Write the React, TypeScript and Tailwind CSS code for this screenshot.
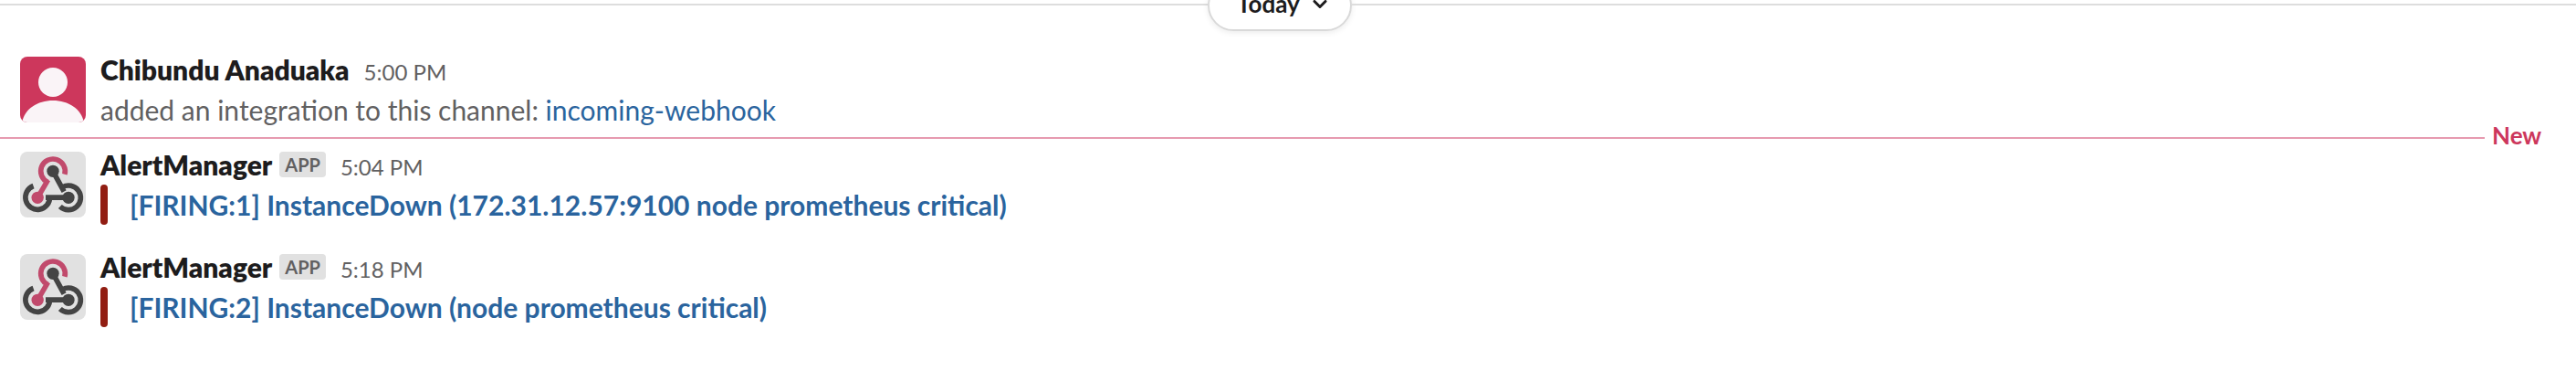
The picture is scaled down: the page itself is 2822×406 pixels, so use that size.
import type { ReactNode } from "react";

function UserAvatar() {
  return (
    <svg className="block size-[72px] shrink-0 rounded-lg" viewBox="0 0 72 72">
      <rect width="72" height="72" fill="#cd375c" />
      <circle cx="36" cy="28" r="16" fill="#faf4f7" />
      <path d="M2 72C5 57 19 48 36 48s31 9 34 24z" fill="#faf4f7" />
    </svg>
  );
}

function WebhookAvatar() {
  return (
    <svg className="block size-[72px] shrink-0 rounded-lg" viewBox="0 0 216 216">
      <rect width="216" height="216" fill="#e1e1e1" />
      <g fill="none" strokeWidth="17">
        <path stroke="#c14a6c" d="M146.6 74.4A40 40 0 1 0 91.5 100.5M91.700 92.600L57.500 151" />
        <path stroke="#444" d="M43.700 112.500A40 40 0 1 0 97.500 147.500M84 150.500H159" />
        <path stroke="#444" d="M131.500 180A40 40 0 1 0 139 116.500M144.400 130.800L108 64" />
      </g>
      <circle cx="108" cy="64" r="20" fill="#444" />
      <circle cx="57.500" cy="151" r="20" fill="#c14a6c" />
      <circle cx="159" cy="151" r="20" fill="#444" />
    </svg>
  );
}

type MessageProps = {
  avatar: ReactNode;
  name: string;
  time: string;
  app?: boolean;
  children: ReactNode;
};

function Message({ avatar, name, time, app, children }: MessageProps) {
  return (
    <article className="flex gap-4 pl-[22px]">
      <div className="pt-2">{avatar}</div>
      <div className="min-w-0 grow">
        <div className="flex h-11 items-baseline whitespace-nowrap leading-[44px]">
          <span className="font-extrabold text-[#1d1c1d]">{name}</span>
          {app && (
            <span className="ml-2 mt-2 h-7 self-start rounded-[4px] bg-[#e1e1e1] px-1.5 text-[20px] font-bold leading-[28px] text-[#616061]">
              APP
            </span>
          )}
          <span className="ml-4 text-[24px] text-[#616061]">{time}</span>
        </div>
        {children}
      </div>
    </article>
  );
}

function Alert({ children }: { children: ReactNode }) {
  return (
    <div className="flex gap-6 leading-[44px]">
      <div className="h-11 w-2 rounded-[4px] bg-[#911d12]" />
      <a className="font-bold text-[#2a649e]">{children}</a>
    </div>
  );
}

export default function App() {
  return (
    <main className="h-[406px] w-full overflow-hidden bg-white font-['Lato',sans-serif] text-[30px]">
      <header className="-mt-[22px] flex h-14 items-center">
        <div className="mb-0.5 h-0.5 w-[1323px] bg-[#dddddd]" />
        <button className="flex h-14 w-[158px] items-center rounded-full border-2 border-[#d9d9d9] pl-[30px] text-[26px] font-bold text-[#1d1c1d] shadow-[0_2px_6px_rgba(0,0,0,0.08)]">
          <span className="mb-1">Today</span>
          <svg className="mb-1 ml-3 h-4 w-5" viewBox="0 0 20 16" fill="none" stroke="currentColor" strokeWidth="3" strokeLinecap="round" strokeLinejoin="round">
            <path d="M4 5.500l6 6 6-6" />
          </svg>
        </button>
        <div className="mb-0.5 h-0.5 grow bg-[#dddddd]" />
      </header>

      <section className="pt-5">
        <Message avatar={<UserAvatar />} name="Chibundu Anaduaka" time="5:00 PM">
          <p className="h-11 leading-[44px] text-[#616061]">
            added an integration to this channel: <a className="text-[#2a649e]">incoming-webhook</a>
          </p>
        </Message>

        <div className="flex h-[16px] items-center pt-0.5">
          <div className="h-0.5 w-[2722px] bg-[#e69ab0]" />
          <span className="mb-1.5 ml-2 text-[26px] font-bold leading-none text-[#cd375c]">New</span>
        </div>

        <Message avatar={<WebhookAvatar />} name="AlertManager" time="5:04 PM" app>
          <Alert>[FIRING:1] InstanceDown (172.31.12.57:9100 node prometheus critical)</Alert>
        </Message>
        <div className="h-6" />
        <Message avatar={<WebhookAvatar />} name="AlertManager" time="5:18 PM" app>
          <Alert>[FIRING:2] InstanceDown (node prometheus critical)</Alert>
        </Message>
      </section>
    </main>
  );
}
